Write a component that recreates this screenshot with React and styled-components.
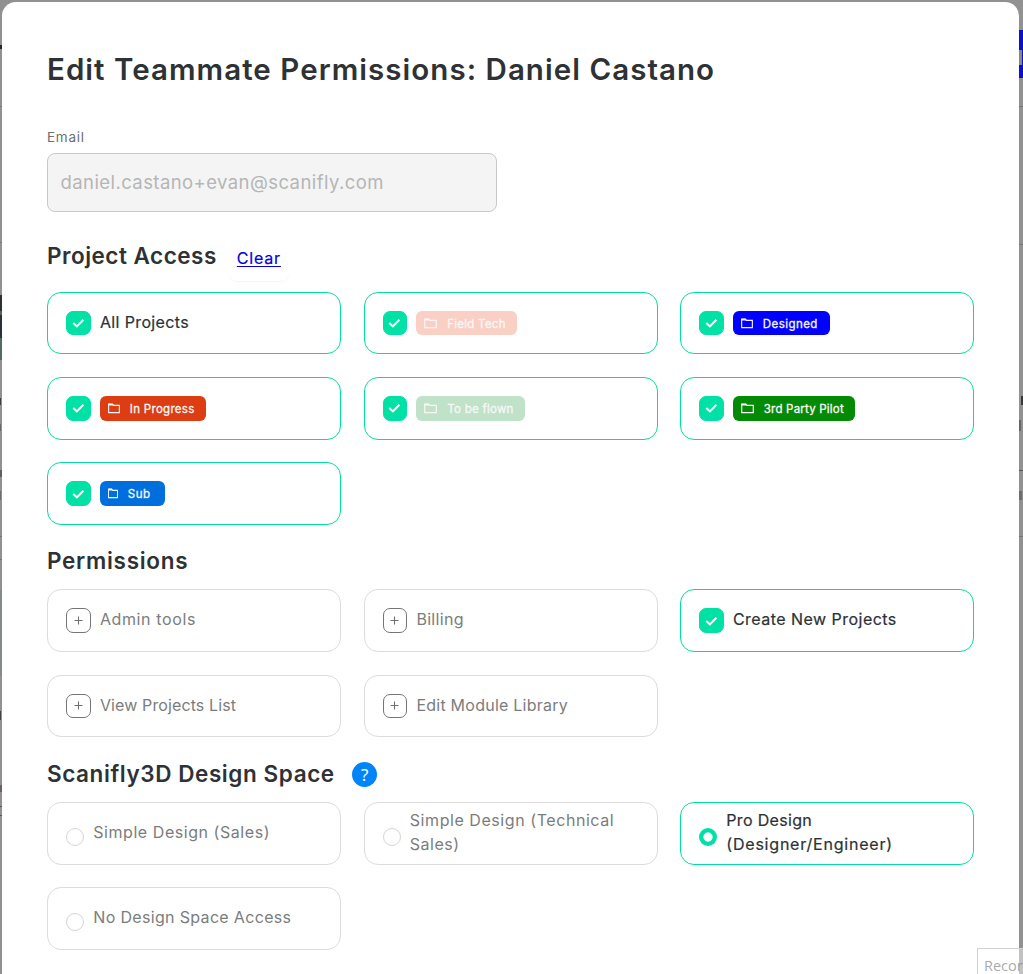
import React from 'react'
import styled, { createGlobalStyle } from 'styled-components'

const GlobalStyle = createGlobalStyle`
* {
  box-sizing: border-box;
}
body {
  margin: 0;
  background: #919191;
  font-family: Inter, "Open Sans", sans-serif;
  color: #2e3235;
  overflow: hidden;
}
`;

const Screen = styled.div`
position: relative;
width: 1023px;
height: 974px;
padding: 2px 4px 0 2px;
overflow: hidden;
`;

const Modal = styled.main`
height: 1000px;
padding: 0 45px;
background: #fff;
border-radius: 14px;
`;

const Title = styled.h1`
margin: 0;
padding-top: 49px;
height: 126px;
font-size: 29.5px;
line-height: 36px;
font-weight: 600;
letter-spacing: 1.04px;
white-space: nowrap;
`;

const FieldLabel = styled.label`
display: block;
height: 25px;
font-size: 13.5px;
line-height: 18px;
letter-spacing: 0.75px;
color: #6d6f70;
`;

const EmailInput = styled.div`
display: flex;
align-items: center;
width: 450px;
height: 59px;
padding: 0 12.5px 2px;
border: 1px solid #c9c9c9;
border-radius: 8px;
background: #f4f4f4;
color: #b5b6b6;
font-size: 18.5px;
letter-spacing: 0.42px;
`;

const SectionHead = styled.div`
display: flex;
align-items: center;
height: ${({ $height }) => $height}px;
padding-top: ${({ $top }) => $top}px;
`;

const SectionTitle = styled.h2`
margin: 0;
font-size: 22.5px;
line-height: 30px;
font-weight: 600;
letter-spacing: ${({ $spacing }) => $spacing}px;
white-space: nowrap;
`;

const ClearLink = styled.a`
margin: 4px 0 0 12px;
padding: 13px 8px;
border-radius: 8px;
box-shadow: 0 1px 1px #f6f6f6;
font-size: 16px;
line-height: 20px;
letter-spacing: 0.8px;
color: #0000e0;
text-decoration: underline;
text-underline-offset: 2px;
-webkit-text-stroke: 0.2px #0000e0;
`;

const Help = styled.span`
display: grid;
place-items: center;
width: 25px;
height: 25px;
margin: 1px 0 0 17.5px;
border-radius: 50%;
background: #0085f8;
color: #fff;
font-family: "Noto Sans", sans-serif;
font-size: 17px;
line-height: 25px;
`;

const Grid = styled.div`
display: grid;
grid-template-columns: repeat(3, 294px);
grid-auto-rows: 62.5px;
column-gap: 22.5px;
row-gap: 22.75px;
`;

const Card = styled.div`
display: flex;
align-items: center;
padding-left: 18px;
border: 1px solid ${({ $active }) => ($active ? '#00dfa2' : '#dcdcdc')};
border-radius: 14px;
color: ${({ $active }) => ($active ? '#2e3235' : '#7b7d7d')};
-webkit-text-stroke: ${({ $active }) => ($active ? '0.22px' : '0')};
`;

const Box = styled.span`
display: grid;
place-items: center;
flex: none;
width: 24.6px;
height: 24.6px;
border: 1px solid ${({ $active }) => ($active ? '#00e2a5' : '#747676')};
border-radius: 7px;
background: ${({ $active }) => ($active ? '#00e2a5' : '#fff')};
`;

const Radio = styled.span`
flex: none;
width: 18px;
height: 18px;
margin-top: 7px;
border: ${({ $active }) => ($active ? '0' : '1px solid #d5d5d5')};
border-radius: 50%;
background: ${({ $active }) => ($active ? 'radial-gradient(circle, #fff 4.2px, #00e2a5 5px)' : '#fff')};
`;

const Label = styled.span`
display: flex;
flex-direction: column;
margin: 0 0 2.6px 9.3px;
font-size: 16px;
line-height: 24px;
`;

const Line = styled.span`
letter-spacing: ${({ $spacing }) => $spacing}px;
white-space: nowrap;
`;

const Tag = styled.span`
display: flex;
align-items: center;
gap: 10px;
width: ${({ $width }) => $width}px;
height: 24.6px;
margin-left: 9.2px;
padding-left: 8px;
border-radius: 6px;
background: ${({ $color }) => $color};
color: #f7f7f7;
font-size: 11.5px;
letter-spacing: ${({ $spacing }) => $spacing}px;
white-space: nowrap;
-webkit-text-stroke: 0.3px;
`;

const TagText = styled.span`
padding-top: 1.4px;
`;

// Parts of the page behind the modal that stay visible at its edges
const Sliver = styled.i`
position: absolute;
${({ $right }) => ($right ? 'left: 1019px;' : 'left: 0;')}
width: ${({ $width, $right }) => $width || ($right ? 4 : 2)}px;
top: ${({ $top }) => $top}px;
height: ${({ $height }) => $height}px;
background: ${({ $color }) => $color};
`;

const Tooltip = styled.div`
position: absolute;
left: 977px;
top: 948px;
width: 90px;
height: 34px;
padding: 6px;
border: 1px solid #d2d2d2;
background: rgba(255, 255, 255, 0.45);
color: rgba(120, 120, 120, 0.65);
font-family: "Open Sans", sans-serif;
font-size: 14.5px;
line-height: 21px;
`;

const slivers = [
  { top: 45, height: 4, color: '#25282b' },
  { top: 106, height: 1, color: '#777' },
  { top: 242, height: 1, color: '#777' },
  { top: 295, height: 43, color: '#2c3136' },
  { top: 311, height: 4, color: '#5a5f57' },
  { top: 338, height: 22, color: '#536962' },
  { top: 398, height: 7, color: '#3c3d3e', width: 1 },
  { top: 424, height: 7, color: '#686a6b', width: 1 },
  { top: 470, height: 7, color: '#5c605f' },
  { top: 491, height: 9, color: '#6c6d6e', width: 1 },
  { top: 536, height: 1, color: '#757575' },
  { top: 559, height: 1, color: '#757575' },
  { top: 590, height: 86, color: '#858b8b' },
  { top: 711, height: 9, color: '#414344', width: 1 },
  { top: 785, height: 7, color: '#6d6261' },
  { top: 806, height: 1, color: '#555' },
  { top: 815, height: 1, color: '#555' },
  { top: 30, height: 48, color: '#0b12c5', right: true },
  { top: 50, height: 15, color: '#888880', right: true, width: 3 },
  { top: 106, height: 1, color: '#747474', right: true },
  { top: 244, height: 1, color: '#747474', right: true },
  { top: 396, height: 9, color: '#33383a', right: true },
  { top: 396, height: 9, color: '#919191', right: true, width: 2 },
  { top: 420, height: 11, color: '#666', right: true, width: 2 },
  { top: 470, height: 1, color: '#555', right: true },
  { top: 491, height: 9, color: '#6c6d6e', right: true, width: 3 },
  { top: 536, height: 1, color: '#757575', right: true },
]

const projects = [
  { label: 'All Projects', spacing: 0.37 },
  { label: 'Field Tech', color: '#facfc4', width: 101, spacing: 0.25 },
  { label: 'Designed', color: '#0000fe', width: 97, spacing: 0.45, icon: 12 },
  { label: 'In Progress', color: '#dc3d12', width: 106, spacing: 0.3, icon: 12 },
  { label: 'To be flown', color: '#c0e2c8', width: 109, spacing: 0.25 },
  { label: '3rd Party Pilot', color: '#048a04', width: 122, spacing: 0.2 },
  { label: 'Sub', color: '#006fdd', width: 65, spacing: 0.5, icon: 10 },
]

const permissions = [
  { label: 'Admin tools', spacing: 0.62 },
  { label: 'Billing', spacing: 0.32 },
  { label: 'Create New Projects', spacing: 0.47, active: true },
  { label: 'View Projects List', spacing: 0.12 },
  { label: 'Edit Module Library', spacing: 0.24 },
]

const designSpace = [
  [{ text: 'Simple Design (Sales)', spacing: 0.55 }],
  [{ text: 'Simple Design (Technical', spacing: 0.56 }, { text: 'Sales)', spacing: 0.52 }],
  [{ text: 'Pro Design', spacing: 0.33 }, { text: '(Designer/Engineer)', spacing: 0.79 }],
  [{ text: 'No Design Space Access', spacing: 0.33 }],
]

function CheckIcon() {
  return (
    <svg width="13" height="12" viewBox="0 0 13 12" fill="none">
      <path d="M1.3 6 L4.9 9.4 L11.4 2.8" stroke="#fff" strokeWidth="2.1" />
    </svg>
  )
}

function PlusIcon() {
  return (
    <svg width="11" height="11" viewBox="0 0 11 11">
      <path d="M5.5 1.5 V9.5 M1.5 5.5 H9.5" stroke="#6f7171" strokeWidth="1.1" />
    </svg>
  )
}

function FolderIcon({ size }) {
  return (
    <svg width={size} height="11" viewBox="0 0 13 11" preserveAspectRatio="none" fill="none">
      <path d="M0.7 9.6 V1.4 H5 L6 2.4 H12.3 V9.6 Z" stroke="currentColor" strokeWidth="1.2" />
      <path d="M0.3 0.6 H5 L6.2 2.6 H0.3 Z" fill="currentColor" />
    </svg>
  )
}

function CheckBox({ active }) {
  return <Box $active={active}>{active ? <CheckIcon /> : <PlusIcon />}</Box>
}

function App() {
  return (
    <Screen>
      <GlobalStyle />
      {slivers.map((s, i) => (
        <Sliver key={i} $top={s.top} $height={s.height} $color={s.color} $right={s.right} $width={s.width} />
      ))}
      <Modal>
        <Title>Edit Teammate Permissions: Daniel Castano</Title>
        <FieldLabel>Email</FieldLabel>
        <EmailInput>daniel.castano+evan@scanifly.com</EmailInput>

        <SectionHead $height={79.9} $top={9}>
          <SectionTitle $spacing={0.5}>Project Access</SectionTitle>
          <ClearLink>Clear</ClearLink>
        </SectionHead>
        <Grid>
          {projects.map((p) => (
            <Card key={p.label} $active>
              <CheckBox active />
              {p.color ? (
                <Tag $color={p.color} $width={p.width} $spacing={p.spacing}>
                  <FolderIcon size={p.icon || 13} />
                  <TagText>{p.label}</TagText>
                </Tag>
              ) : (
                <Label>
                  <Line $spacing={p.spacing}>{p.label}</Line>
                </Label>
              )}
            </Card>
          ))}
        </Grid>

        <SectionHead $height={64.5} $top={8}>
          <SectionTitle $spacing={0.72}>Permissions</SectionTitle>
        </SectionHead>
        <Grid>
          {permissions.map((p) => (
            <Card key={p.label} $active={p.active}>
              <CheckBox active={p.active} />
              <Label>
                <Line $spacing={p.spacing}>{p.label}</Line>
              </Label>
            </Card>
          ))}
        </Grid>

        <SectionHead $height={65} $top={8.4}>
          <SectionTitle $spacing={0.58}>Scanifly3D Design Space</SectionTitle>
          <Help>?</Help>
        </SectionHead>
        <Grid>
          {designSpace.map((lines, i) => (
            <Card key={i} $active={i === 2}>
              <Radio $active={i === 2} />
              <Label>
                {lines.map((l) => (
                  <Line key={l.text} $spacing={l.spacing}>{l.text}</Line>
                ))}
              </Label>
            </Card>
          ))}
        </Grid>
      </Modal>
      <Tooltip>Record</Tooltip>
    </Screen>
  )
}

export default App
